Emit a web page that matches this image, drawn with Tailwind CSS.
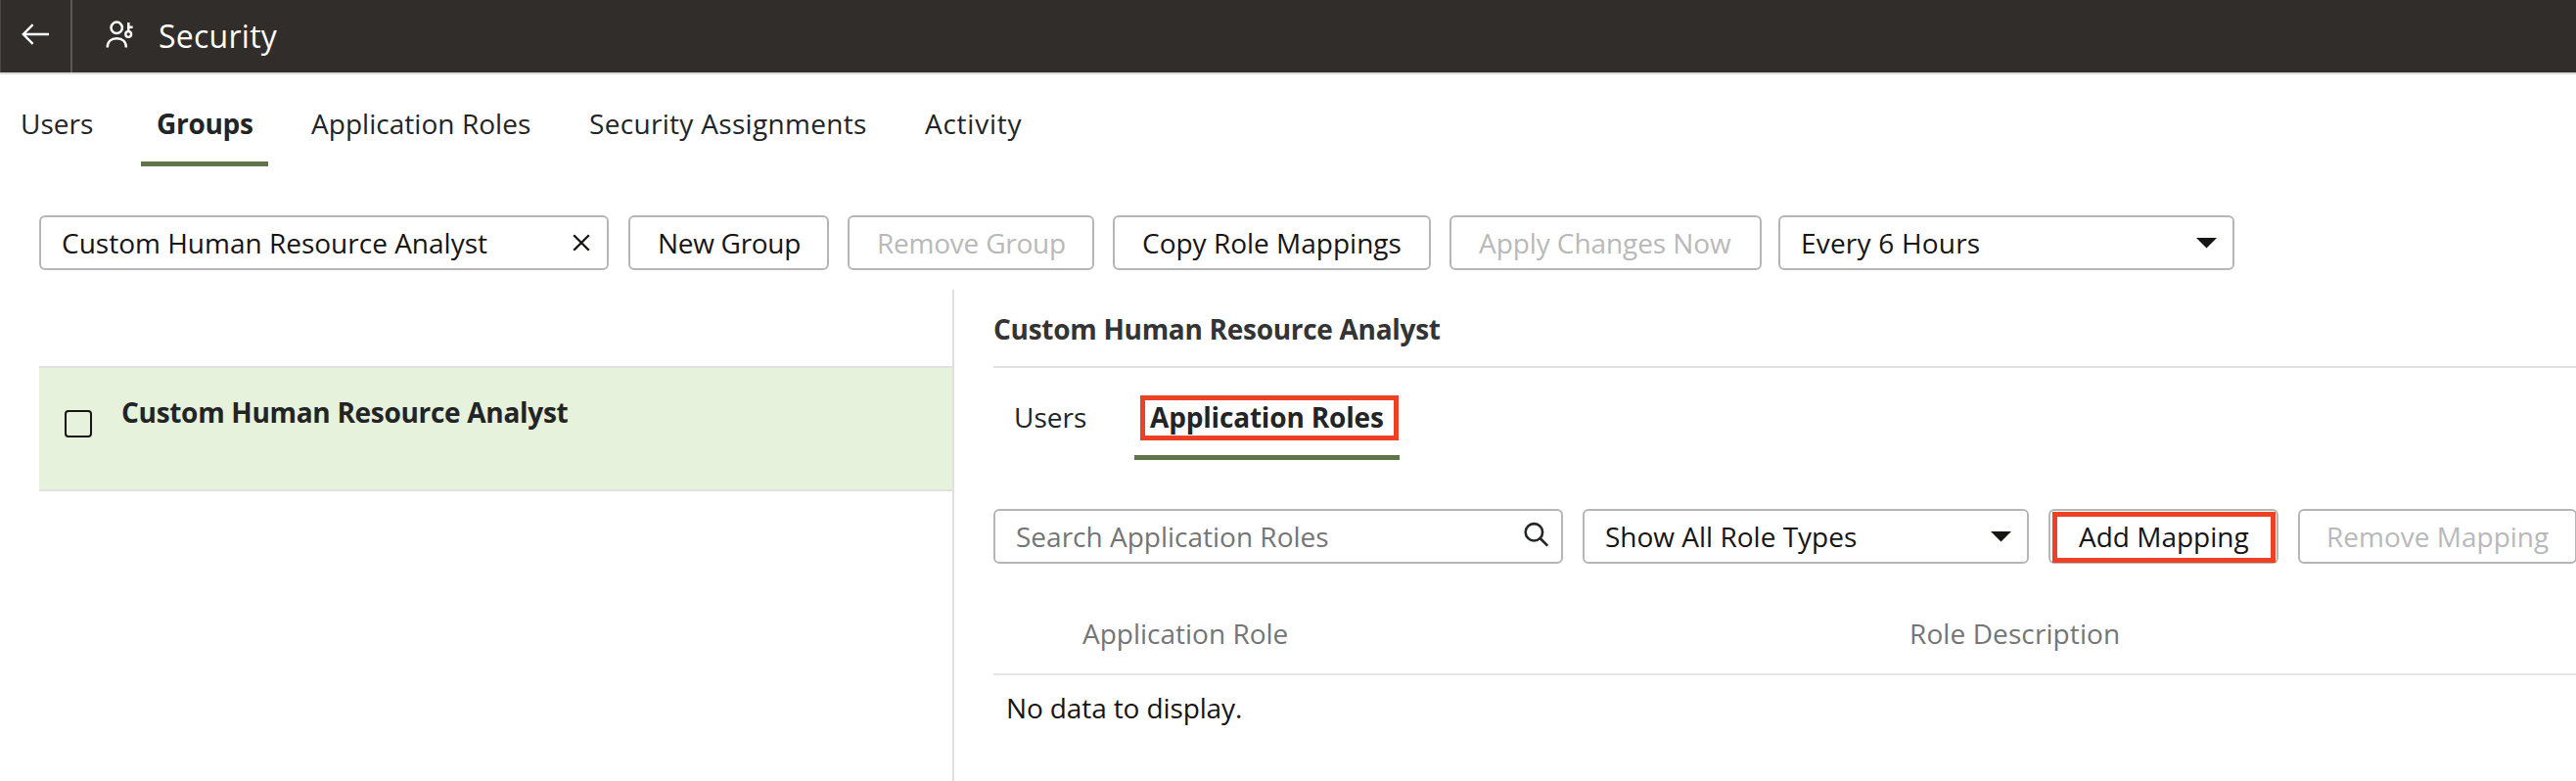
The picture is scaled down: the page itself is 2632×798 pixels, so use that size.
<!DOCTYPE html>
<html lang="en">
<head>
<meta charset="utf-8">
<title>Security</title>
<script src="https://cdn.jsdelivr.net/npm/@tailwindcss/browser@4"></script>
</head>
<body class="h-[798px] w-[2632px] overflow-hidden bg-white font-['Open_Sans',sans-serif] text-[28px] leading-[56px] whitespace-nowrap text-[#161513] flex flex-col">

<header class="flex h-[76px] shrink-0 border-b-2 border-[#d9d9d9] bg-[#312d2a] text-white">
  <button class="h-[74px] w-[74px] border-r-2 border-l border-r-[#5c5856] border-l-[#4a4644]" aria-label="Back">
    <svg class="block" width="71" height="74" viewBox="1 0 71 74" fill="none" stroke="currentColor" stroke-width="2.4"><path d="M50 35H23.5M33.6 25.2L23.8 35L33.6 44.8"/></svg>
  </button>
  <svg class="block" width="88" height="74" viewBox="74 0 88 74" fill="none" stroke="currentColor" stroke-width="2.5">
    <circle cx="119.2" cy="28.3" r="5.7"/>
    <path d="M109.7 48.6C109.7 42.5 113.6 39.2 119.3 39.2S128.9 42.5 128.9 48.6"/>
    <circle cx="131.2" cy="35" r="2.9" stroke-width="2.4"/>
    <path d="M131.3 23V32M131.3 27.7H135.6" stroke-width="2.5"/>
  </svg>
  <h1 class="text-[32px] leading-[73px] tracking-[0.25px]">Security</h1>
</header>

<nav class="flex h-[94px] shrink-0 pt-[22px] pl-[21px] text-[#222426]">
  <a class="w-[123px]">Users</a>
  <a class="w-[130px] border-b-5 border-[#5f7448] pl-4 font-bold tracking-[-0.29px]">Groups</a>
  <a class="ml-11 w-[284px] tracking-[0.04px]">Application Roles</a>
  <a class="w-[343px] tracking-[0.31px]">Security Assignments</a>
  <a class="tracking-[0.75px]">Activity</a>
</nav>

<div class="mt-[50px] flex h-14 shrink-0 pl-10 leading-[52px]">
  <div class="flex w-[582px] items-center rounded-[6px] border-2 border-[#b6b6b6] pl-[21px]">
    <span class="grow">Custom Human Resource Analyst</span>
    <svg class="mr-[17px]" width="18" height="18" viewBox="0 0 18 18" fill="none" stroke="currentColor" stroke-width="2.3"><path d="M1.2 1.2L16.8 16.8M16.8 1.2L1.2 16.8"/></svg>
  </div>
  <button class="ml-5 w-[205px] rounded-[6px] border-2 border-[#b6b6b6] pl-[28px] text-left tracking-[-0.3px]">New Group</button>
  <button class="ml-[19px] w-[252px] rounded-[6px] border-2 border-[#b6b6b6] pl-[28px] text-left tracking-[-0.23px] text-[#b9b9b9]">Remove Group</button>
  <button class="ml-[19px] w-[325px] rounded-[6px] border-2 border-[#b6b6b6] pl-[28px] text-left">Copy Role Mappings</button>
  <button class="ml-[19px] w-[319px] rounded-[6px] border-2 border-[#b6b6b6] pl-[28px] text-left tracking-[-0.08px] text-[#b9b9b9]">Apply Changes Now</button>
  <div class="ml-[17px] flex w-[466px] items-center rounded-[6px] border-2 border-[#b6b6b6] pl-[21px]">
    <span class="grow tracking-[0.2px]">Every 6 Hours</span>
    <svg class="mr-4" width="21" height="11" viewBox="0 0 21 11" fill="currentColor"><path d="M0 0H21L10.5 10.5Z"/></svg>
  </div>
</div>

<main class="mt-5 flex grow pl-10">
  <section class="w-[933px] shrink-0 pt-[78px]">
    <div class="flex h-32 border-y-2 border-[#dfe1df] bg-[#e6f2dc] pl-[26px]">
      <span class="mt-[43px] size-7 rounded-[4px] border-2 border-[#161513]"></span>
      <b class="mt-[17px] ml-[30px] tracking-[-0.3px] text-[#222426]">Custom Human Resource Analyst</b>
    </div>
  </section>

  <section class="w-[1659px] shrink-0 border-l-2 border-[#dfe0df] pl-10">
    <h2 class="h-20 border-b-2 border-[#e0e0e0] pt-3 font-bold tracking-[-0.29px] text-[#343434]">Custom Human Resource Analyst</h2>
    <div class="flex h-[94px] pt-[22px] pl-[21px] text-[#222426]">
      <a class="w-[123px]">Users</a>
      <a class="relative w-[271px] border-b-5 border-[#5f7448] pl-4 font-bold tracking-[-0.18px]">Application Roles
        <span class="absolute top-[6px] left-[6px] h-[46px] w-[264px] border-5 border-[#ed4125]"></span>
      </a>
    </div>

    <div class="mt-[50px] flex h-14 leading-[52px]">
      <div class="flex w-[582px] shrink-0 items-center rounded-[6px] border-2 border-[#b6b6b6] pl-[21px]">
        <span class="grow text-[#757575]">Search Application Roles</span>
        <svg class="mr-3 mb-1 text-[#222426]" width="26" height="26" viewBox="0 0 26 26" fill="none" stroke="currentColor" stroke-width="2.6"><circle cx="10.4" cy="10.8" r="8.7"/><path d="M16.6 17L24.2 24.6"/></svg>
      </div>
      <div class="ml-5 flex w-[456px] shrink-0 items-center rounded-[6px] border-2 border-[#b6b6b6] pl-[21px]">
        <span class="grow">Show All Role Types</span>
        <svg class="mr-4" width="21" height="11" viewBox="0 0 21 11" fill="currentColor"><path d="M0 0H21L10.5 10.5Z"/></svg>
      </div>
      <button class="relative ml-5 w-[235px] shrink-0 rounded-[6px] border-2 border-[#b6b6b6] pl-[29px] text-left">Add Mapping
        <span class="absolute top-[1px] left-[2px] h-[52px] w-[228px] border-5 border-[#ed4125]"></span>
      </button>
      <button class="ml-5 w-[285px] shrink-0 rounded-[6px] border-2 border-[#b6b6b6] pl-[27px] text-left text-[#b9b9b9]">Remove Mapping</button>
    </div>

    <div class="mt-[42px] flex h-[72px] border-b-2 border-[#e6e6e6] pt-px pl-[91px] text-[#757575]">
      <span class="w-[845px]">Application Role</span>
      <span class="tracking-[0.1px]">Role Description</span>
    </div>
    <p class="pt-[5px] pl-[13px] tracking-[-0.12px]">No data to display.</p>
  </section>
</main>
</body>
</html>
